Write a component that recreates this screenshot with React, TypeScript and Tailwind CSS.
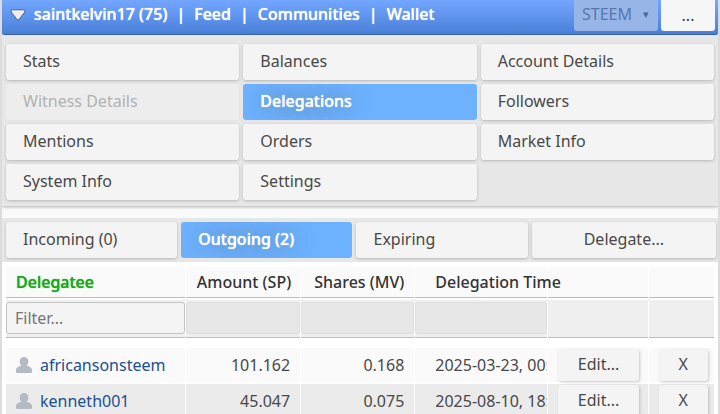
import { clsx } from "clsx";

const headerLinks = ["saintkelvin17 (75)", "Feed", "Communities", "Wallet"];

const menu = [
  { label: "Stats" },
  { label: "Balances" },
  { label: "Account Details" },
  { label: "Witness Details", disabled: true },
  { label: "Delegations", active: true },
  { label: "Followers" },
  { label: "Mentions" },
  { label: "Orders" },
  { label: "Market Info" },
  { label: "System Info" },
  { label: "Settings" },
];

const delegations = [
  { name: "africansonsteem", amount: "101.162", shares: "0.168", time: "2025-03-23, 00:" },
  { name: "kenneth001", amount: "45.047", shares: "0.075", time: "2025-08-10, 18:" },
];

type TabButtonProps = { label: string; active?: boolean; disabled?: boolean; center?: boolean };

function TabButton({ label, active, disabled, center }: TabButtonProps) {
  return (
    <button
      type="button"
      disabled={disabled}
      className={clsx(
        "h-9 truncate rounded-[3px] px-[17px] pb-[2px]",
        center ? "text-center" : "text-left",
        active && "bg-[#6cb2ff] font-medium text-white [text-shadow:0_0_1px_#fff,0_0_20px_#606870]",
        disabled && "bg-[#ededed] text-[#b2b2b2]",
        !active && !disabled && "bg-[#f4f4f4] text-[#484848] shadow-[0_1px_3px_rgba(0,0,0,0.22)]",
      )}
    >
      {label}
    </button>
  );
}

function UserIcon() {
  return (
    <svg viewBox="0 0 16 16" className="h-4 w-4 shrink-0" fill="#b4bbc2" aria-hidden="true">
      <path d="M8 0C5.500 0 3.600 1.800 3.600 4.400c0 1.900.9 3.500 2.100 4.400C2.800 9.200 0 10.600 0 13.200V15q0 1 1 1h14q1 0 1-1v-1.800c0-2.600-2.800-4-5.700-4.400 1.200-.9 2.100-2.500 2.100-4.400C12.400 1.800 10.500 0 8 0Z" />
    </svg>
  );
}

function Header() {
  return (
    <header className="flex h-[35px] rounded-b-[2px] border-b border-[#3c68b8] bg-linear-to-b from-[#73a7ff] to-[#4a7fd8] pr-[3px] font-medium text-white shadow-[0_1px_3px_rgba(0,0,0,0.25)] [text-shadow:0_0_1px_#fff]">
      <nav className="flex h-7 min-w-0 flex-1 items-center pl-2">
        <svg viewBox="0 0 16 12" className="mt-[2px] mr-2 h-3 w-4 shrink-0" aria-hidden="true">
          <path d="M2 .8h12q1.500.3.8 2.200L9 10.500q-1 .9-2 0L1.200 3Q.5 1.100 2 .8Z" fill="#eee" stroke="#485f92" />
        </svg>
        {headerLinks.map((link, i) => (
          <span key={link} className="whitespace-nowrap">
            {i > 0 && <span className="px-[9px]">|</span>}
            <a href="#">{link}</a>
          </span>
        ))}
      </nav>
      <div className="flex h-[31px] gap-[3px] font-normal text-shadow-none">
        <div className="relative w-[84px]">
          <select
            disabled
            aria-label="Chain"
            className="h-full w-full appearance-none rounded-b-[3px] bg-[#98b5e8] pb-[3px] pl-2 text-[#5577ad] opacity-100"
          >
            <option>STEEM</option>
          </select>
          <span className="pointer-events-none absolute top-[6px] right-[9px] text-[11px] leading-4 text-[#45669f]">▾</span>
        </div>
        <button type="button" className="w-[54px] rounded-b-[3px] bg-[#f6f6f6] pb-[2px] text-[#404040]">
          ...
        </button>
      </div>
    </header>
  );
}

function RowButton({ label }: { label: string }) {
  return (
    <button
      type="button"
      className="block h-8 w-full rounded-[3px] bg-[#f4f4f4] pb-[2px] shadow-[1px_1px_3px_rgba(0,0,0,0.2)]"
    >
      {label}
    </button>
  );
}

function DelegationTable() {
  const head = "border-b border-[#bcbcbc] bg-[#fafafa] font-medium whitespace-nowrap";
  const filter = "border-b border-[#bcbcbc] bg-[#efefef] pb-[2px]";
  return (
    <div className="px-[3px] pt-[3px]">
      <table className="w-full table-fixed border-separate border-spacing-x-[1px] border-spacing-y-[2px]">
        <colgroup>
          <col className="w-[25.5%]" />
          <col className="w-[16.2%]" />
          <col className="w-[16.1%]" />
          <col className="w-[18.8%]" />
          <col className="w-[14.1%]" />
          <col className="w-[9.3%]" />
        </colgroup>
        <thead className="text-[#333]">
          <tr className="h-[31px]">
            <th className={clsx(head, "pl-[10px] text-left text-[#1aa81a] [text-shadow:0_0_1px_#1aa81a]")}>Delegatee</th>
            <th className={clsx(head, "pr-[9px] text-right")}>Amount (SP)</th>
            <th className={clsx(head, "pr-[10px] text-right")}>Shares (MV)</th>
            <th className={clsx(head, "pl-5 text-left")}>Delegation Time</th>
            <th className={head} />
            <th className={head} />
          </tr>
          <tr className="h-[38px]">
            <td className={filter}>
              <input
                type="text"
                aria-label="Filter delegatee"
                placeholder="Filter..."
                className="block h-8 w-full rounded-[3px] border border-[#c4c4c4] bg-[#f4f4f4] px-2 placeholder:text-[#757575]"
              />
            </td>
            {["amount", "shares", "time"].map((col) => (
              <td key={col} className={filter}>
                <input
                  type="text"
                  disabled
                  aria-label={`Filter ${col}`}
                  className="block h-8 w-full rounded-[3px] border border-[#dedede] bg-[#e7e7e7]"
                />
              </td>
            ))}
            <td className={filter} />
            <td className={filter} />
          </tr>
        </thead>
        <tbody className="text-[#484848]">
          <tr className="h-[6px]" aria-hidden="true" />
          {delegations.map((row, i) => (
            <tr key={row.name} className={clsx("h-[34px]", i % 2 ? "*:bg-[#ebebeb]" : "*:bg-[#fafafa]")}>
              <td className="pl-[10px]">
                <a href="#" className="flex items-center gap-2 text-[#204f93]">
                  <UserIcon />
                  {row.name}
                </a>
              </td>
              <td className="pr-[10px] text-right">{row.amount}</td>
              <td className="pr-[10px] text-right">{row.shares}</td>
              <td className="overflow-hidden pl-5 whitespace-nowrap">{row.time}</td>
              <td className="pr-[9px] pl-[10px]">
                <RowButton label="Edit..." />
              </td>
              <td className="pr-[6px] pl-[10px]">
                <RowButton label="X" />
              </td>
            </tr>
          ))}
        </tbody>
      </table>
    </div>
  );
}

export default function App() {
  return (
    <div className="h-screen overflow-hidden border-x-2 border-[#dcdcdc] bg-white font-['Noto_Sans',sans-serif] text-base leading-6">
      <Header />
      <div className="bg-[#fafafa] pb-3">
        <nav className="grid grid-cols-3 gap-1 bg-[#e7e7e7] px-1 pt-[9px] pb-[6px] shadow-[0_1px_3px_rgba(0,0,0,0.3)]">
          {menu.map((item) => (
            <TabButton key={item.label} {...item} />
          ))}
        </nav>
      </div>
      <div className="grid grid-cols-[171fr_171fr_171fr_184fr] gap-1 bg-[#e7e7e7] py-1 pr-[2px] pl-1">
        <TabButton label="Incoming (0)" />
        <TabButton label="Outgoing (2)" active />
        <TabButton label="Expiring" />
        <TabButton label="Delegate..." center />
      </div>
      <DelegationTable />
    </div>
  );
}
